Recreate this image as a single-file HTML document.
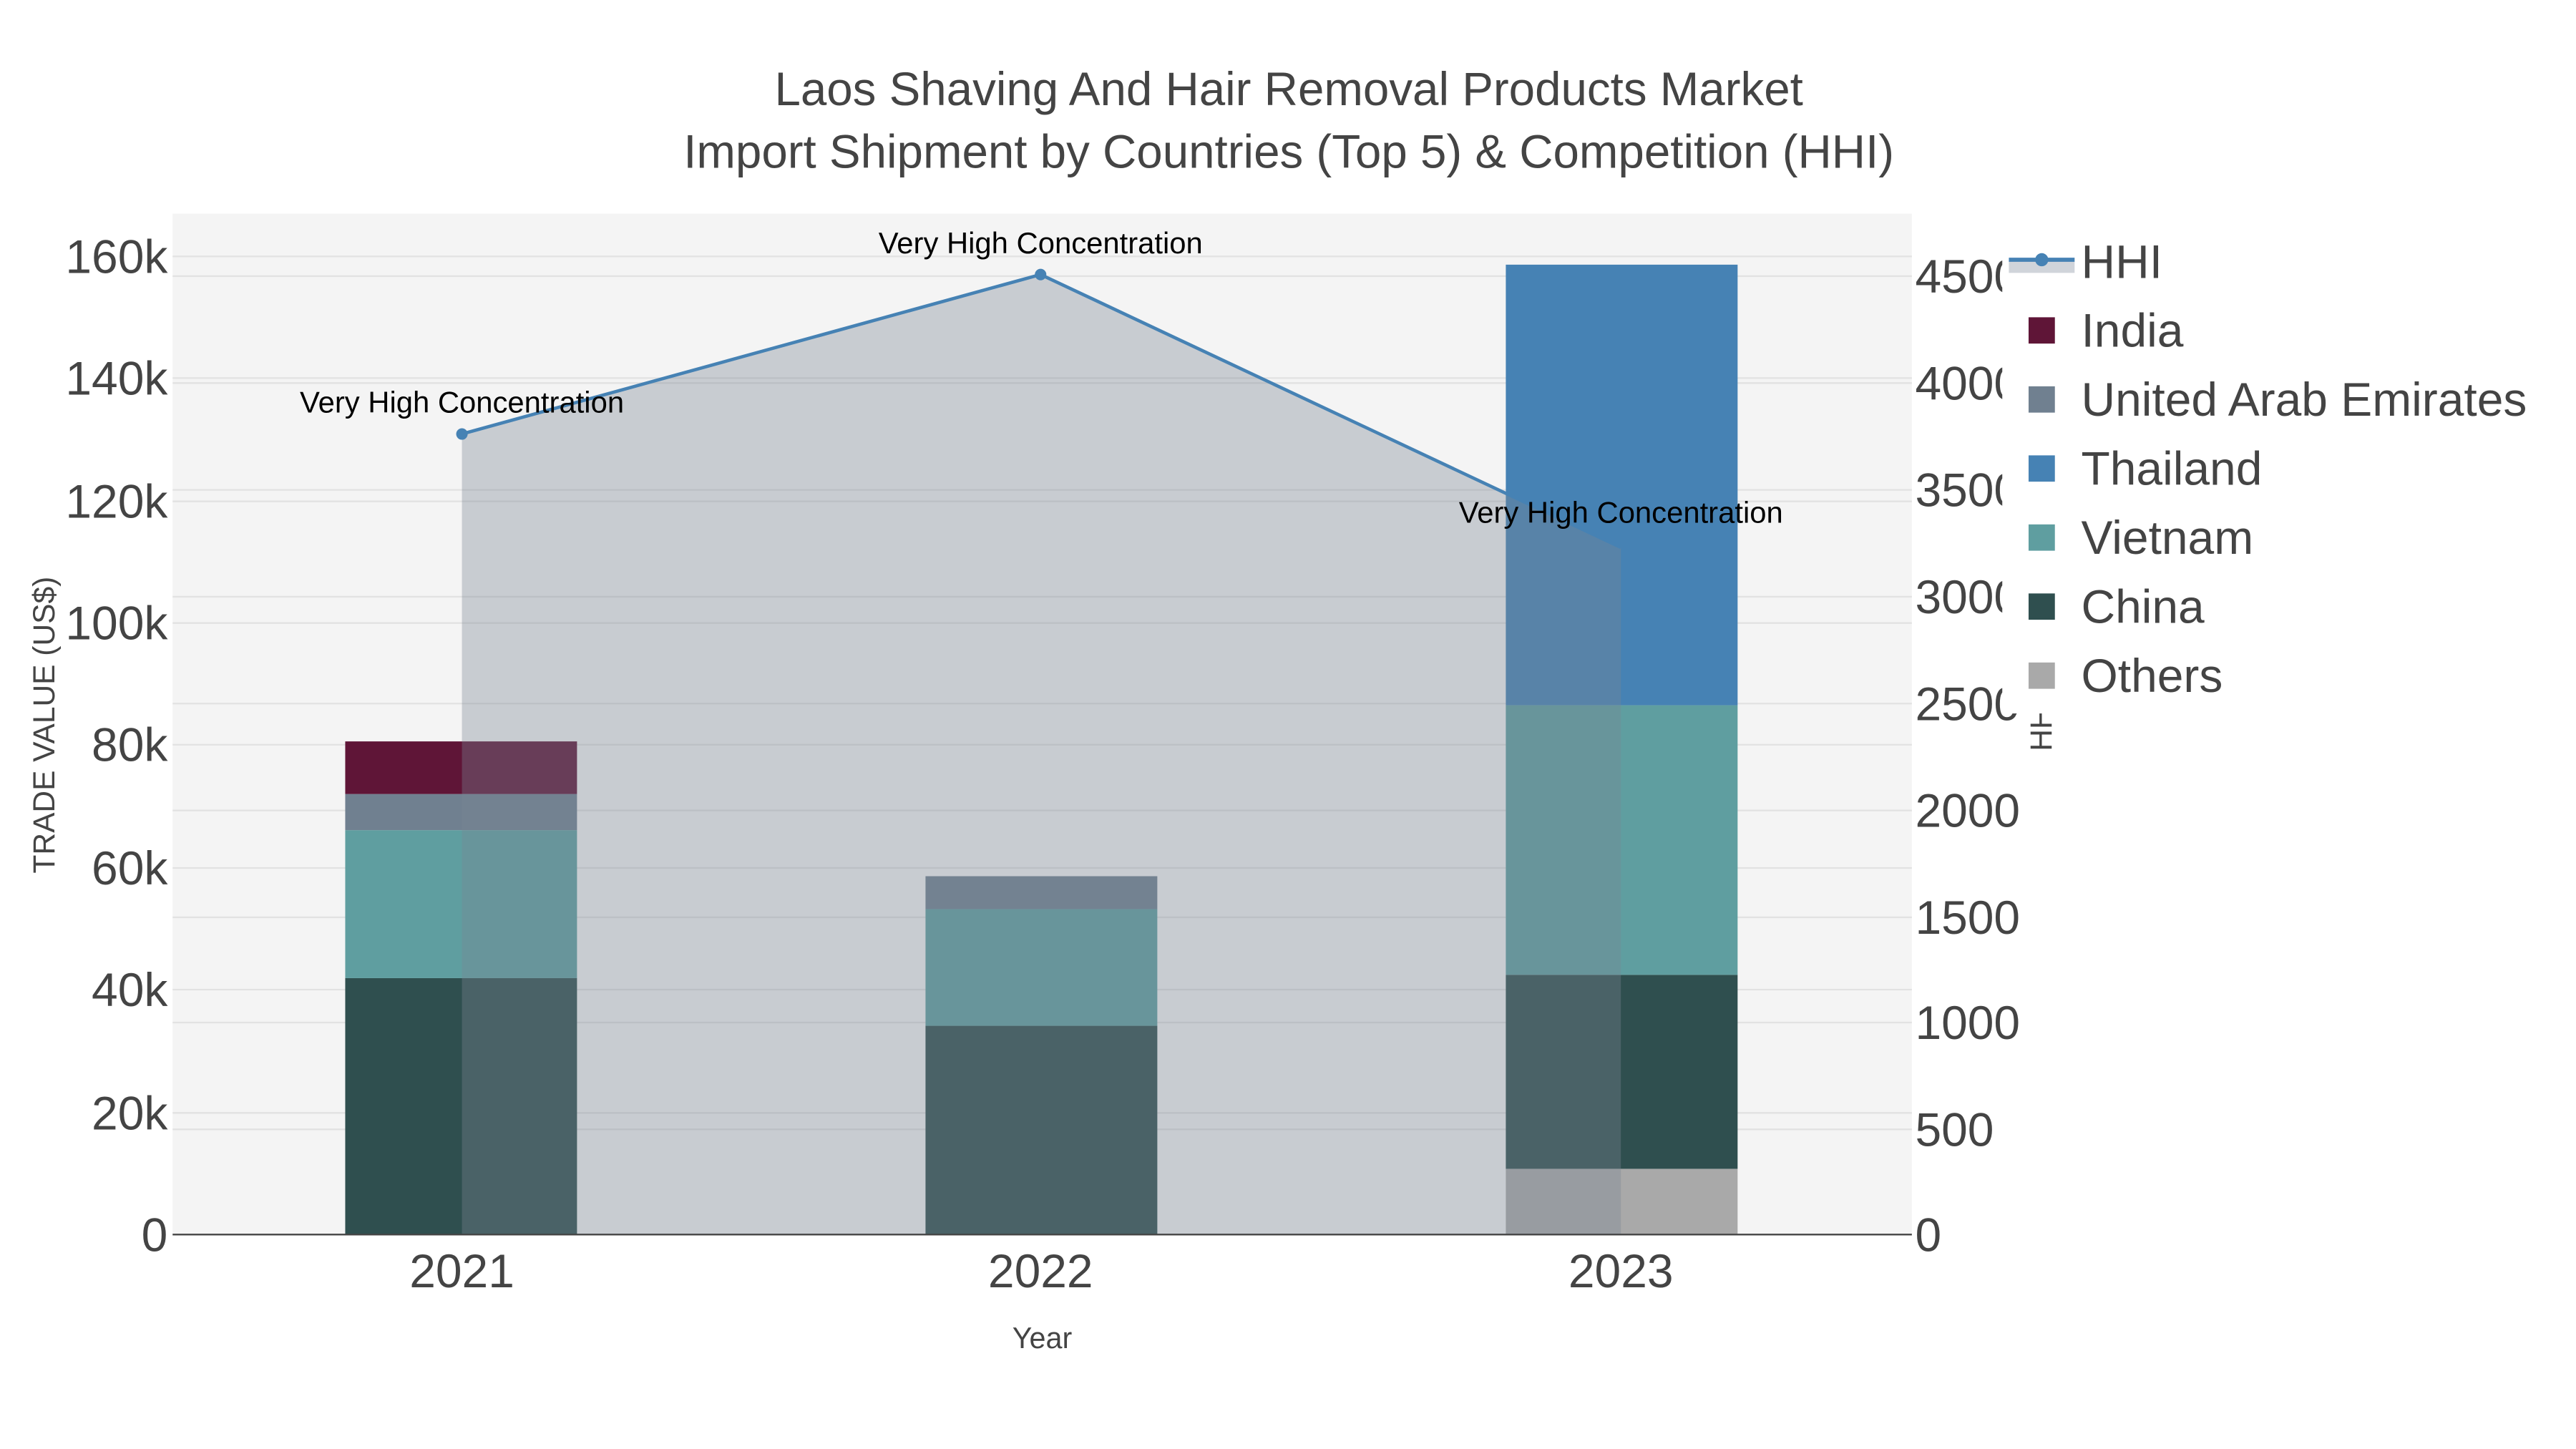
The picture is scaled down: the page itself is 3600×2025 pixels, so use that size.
<!DOCTYPE html>
<html><head><meta charset="utf-8"><style>
html,body{margin:0;padding:0;background:#fff;width:3600px;height:2025px;overflow:hidden}
svg{display:block}
text{font-family:"Liberation Sans",sans-serif}
</style></head><body>
<svg width="3600" height="2025" viewBox="0 0 1567 881.4" preserveAspectRatio="xMinYMin meet" xmlns="http://www.w3.org/2000/svg">
<rect width="1567" height="881.4" fill="#fff"/>
<text x="784" y="64" text-anchor="middle" font-size="28.5" fill="#444">Laos Shaving And Hair Removal Products Market</text>
<text x="784" y="102" text-anchor="middle" font-size="28.5" fill="#444">Import Shipment by Countries (Top 5) &amp; Competition (HHI)</text>
<rect x="105" y="130" width="1058" height="621" fill="#f4f4f4"/>
<g stroke="#e2e2e2" stroke-width="1">
<line x1="105" x2="1163" y1="156" y2="156"/><line x1="105" x2="1163" y1="230" y2="230"/><line x1="105" x2="1163" y1="305" y2="305"/><line x1="105" x2="1163" y1="379" y2="379"/><line x1="105" x2="1163" y1="453" y2="453"/><line x1="105" x2="1163" y1="528" y2="528"/><line x1="105" x2="1163" y1="602" y2="602"/><line x1="105" x2="1163" y1="677" y2="677"/>
<line x1="105" x2="1163" y1="687" y2="687"/><line x1="105" x2="1163" y1="622" y2="622"/><line x1="105" x2="1163" y1="558" y2="558"/><line x1="105" x2="1163" y1="493" y2="493"/><line x1="105" x2="1163" y1="428" y2="428"/><line x1="105" x2="1163" y1="363" y2="363"/><line x1="105" x2="1163" y1="298" y2="298"/><line x1="105" x2="1163" y1="233" y2="233"/><line x1="105" x2="1163" y1="168" y2="168"/>
</g>
<rect x="210" y="595" width="141" height="156" fill="#2f4f4f"/>
<rect x="210" y="505" width="141" height="90" fill="#5f9ea0"/>
<rect x="210" y="483" width="141" height="22" fill="#708090"/>
<rect x="210" y="451" width="141" height="32" fill="#5f1537"/>
<rect x="563" y="624" width="141" height="127" fill="#2f4f4f"/>
<rect x="563" y="553" width="141" height="71" fill="#5f9ea0"/>
<rect x="563" y="533" width="141" height="20" fill="#708090"/>
<rect x="916" y="711" width="141" height="40" fill="#a9a9a9"/>
<rect x="916" y="593" width="141" height="118" fill="#2f4f4f"/>
<rect x="916" y="429" width="141" height="164" fill="#5f9ea0"/>
<rect x="916" y="161" width="141" height="268" fill="#4682b4"/>
<polygon points="281,751 281,264 633,167 986,333 986,751" fill="rgb(122,132,147)" fill-opacity="0.36"/>
<polyline points="281,264 633,167 986,333" fill="none" stroke="#4682b4" stroke-width="2"/>
<circle cx="281" cy="264" r="3.5" fill="#4682b4"/><circle cx="633" cy="167" r="3.5" fill="#4682b4"/>
<line x1="105" x2="1163" y1="751" y2="751" stroke="#444" stroke-width="1"/>
<g font-size="18.2" fill="#000" text-anchor="middle">
<text x="281" y="251">Very High Concentration</text>
<text x="633" y="154">Very High Concentration</text>
<text x="986" y="318">Very High Concentration</text>
</g>
<g font-size="28.7" fill="#444" text-anchor="end">
<text x="102" y="761">0</text><text x="102" y="687">20k</text><text x="102" y="612">40k</text><text x="102" y="538">60k</text><text x="102" y="463">80k</text><text x="102" y="389">100k</text><text x="102" y="315">120k</text><text x="102" y="240">140k</text><text x="102" y="166">160k</text>
</g>
<g font-size="28.7" fill="#444">
<text x="1165" y="761">0</text><text x="1165" y="697">500</text><text x="1165" y="632">1000</text><text x="1165" y="568">1500</text><text x="1165" y="503">2000</text><text x="1165" y="438">2500</text><text x="1165" y="373">3000</text><text x="1165" y="308">3500</text><text x="1165" y="243">4000</text><text x="1165" y="178">4500</text>
</g>
<g font-size="28.7" fill="#444" text-anchor="middle">
<text x="281" y="783">2021</text><text x="633" y="783">2022</text><text x="986" y="783">2023</text>
</g>
<text x="634" y="820" font-size="18" fill="#444" text-anchor="middle">Year</text>
<text transform="translate(33,441) rotate(-90)" font-size="18.5" fill="#444" text-anchor="middle">TRADE VALUE (US$)</text>
<text transform="translate(1248,441) rotate(-90)" font-size="18.5" fill="#444" text-anchor="middle">HHI</text>
<rect x="1218" y="138" width="349" height="296" fill="#fff"/>
<rect x="1222" y="159" width="40" height="7" fill="#d0d4da"/>
<line x1="1222" x2="1262" y1="158" y2="158" stroke="#4682b4" stroke-width="2.5"/>
<circle cx="1242" cy="158" r="4" fill="#4682b4"/>
<rect x="1234" y="193" width="16" height="16" fill="#5f1537"/>
<rect x="1234" y="235" width="16" height="16" fill="#708090"/>
<rect x="1234" y="277" width="16" height="16" fill="#4682b4"/>
<rect x="1234" y="319" width="16" height="16" fill="#5f9ea0"/>
<rect x="1234" y="361" width="16" height="16" fill="#2f4f4f"/>
<rect x="1234" y="403" width="16" height="16" fill="#a9a9a9"/>
<g font-size="28.7" fill="#444">
<text x="1266" y="169">HHI</text><text x="1266" y="211">India</text><text x="1266" y="253">United Arab Emirates</text><text x="1266" y="295">Thailand</text><text x="1266" y="337">Vietnam</text><text x="1266" y="379">China</text><text x="1266" y="421">Others</text>
</g>
</svg>
</body></html>
